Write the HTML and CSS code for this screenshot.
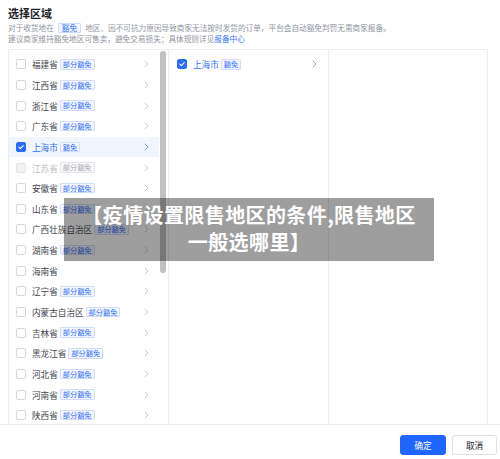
FILE: index.html
```html
<!DOCTYPE html>
<html lang="zh-CN">
<head>
<meta charset="utf-8">
<link rel="stylesheet" href="styles.css">
</head>
<body>
<div class="page">
  <div class="head">
    <div class="title">选择区域</div>
    <div class="desc">对于收货地在<span class="dtag">豁免</span>地区、因不可抗力原因导致商家无法按时发货的订单，平台会自动豁免判罚无需商家报备。</div>
    <div class="desc">建议商家维持豁免地区可售卖，避免交易损失；具体规则详见<span class="link">报备中心</span></div>
  </div>
  <div class="panel">
    <div class="col col1">
      <div class="list">
        <div class="row"><span class="cb"></span><span class="name">福建省</span><span class="tag">部分豁免</span><svg class="arr" viewBox="0 0 5 8"><path d="M1 1 L4 4 L1 7"/></svg></div>
        <div class="row"><span class="cb"></span><span class="name">江西省</span><span class="tag">部分豁免</span><svg class="arr" viewBox="0 0 5 8"><path d="M1 1 L4 4 L1 7"/></svg></div>
        <div class="row"><span class="cb"></span><span class="name">浙江省</span><span class="tag">部分豁免</span><svg class="arr" viewBox="0 0 5 8"><path d="M1 1 L4 4 L1 7"/></svg></div>
        <div class="row"><span class="cb"></span><span class="name">广东省</span><span class="tag">部分豁免</span><svg class="arr" viewBox="0 0 5 8"><path d="M1 1 L4 4 L1 7"/></svg></div>
        <div class="row active"><span class="cb on"><svg viewBox="0 0 10 10"><path d="M2.3 5.2 L4.2 7 L7.8 3.2" fill="none" stroke="#fff" stroke-width="1.3" stroke-linecap="round" stroke-linejoin="round"/></svg></span><span class="name">上海市</span><span class="tag">豁免</span><svg class="arr" viewBox="0 0 5 8"><path d="M1 1 L4 4 L1 7"/></svg></div>
        <div class="row disabled"><span class="cb"></span><span class="name">江苏省</span><span class="tag">部分豁免</span><svg class="arr" viewBox="0 0 5 8"><path d="M1 1 L4 4 L1 7"/></svg></div>
        <div class="row"><span class="cb"></span><span class="name">安徽省</span><span class="tag">部分豁免</span><svg class="arr" viewBox="0 0 5 8"><path d="M1 1 L4 4 L1 7"/></svg></div>
        <div class="row"><span class="cb"></span><span class="name">山东省</span><span class="tag">部分豁免</span><svg class="arr" viewBox="0 0 5 8"><path d="M1 1 L4 4 L1 7"/></svg></div>
        <div class="row"><span class="cb"></span><span class="name">广西壮族自治区</span><span class="tag">部分豁免</span><svg class="arr" viewBox="0 0 5 8"><path d="M1 1 L4 4 L1 7"/></svg></div>
        <div class="row"><span class="cb"></span><span class="name">湖南省</span><span class="tag">部分豁免</span><svg class="arr" viewBox="0 0 5 8"><path d="M1 1 L4 4 L1 7"/></svg></div>
        <div class="row"><span class="cb"></span><span class="name">海南省</span><svg class="arr" viewBox="0 0 5 8"><path d="M1 1 L4 4 L1 7"/></svg></div>
        <div class="row"><span class="cb"></span><span class="name">辽宁省</span><span class="tag">部分豁免</span><svg class="arr" viewBox="0 0 5 8"><path d="M1 1 L4 4 L1 7"/></svg></div>
        <div class="row"><span class="cb"></span><span class="name">内蒙古自治区</span><span class="tag">部分豁免</span><svg class="arr" viewBox="0 0 5 8"><path d="M1 1 L4 4 L1 7"/></svg></div>
        <div class="row"><span class="cb"></span><span class="name">吉林省</span><span class="tag">部分豁免</span><svg class="arr" viewBox="0 0 5 8"><path d="M1 1 L4 4 L1 7"/></svg></div>
        <div class="row"><span class="cb"></span><span class="name">黑龙江省</span><span class="tag">部分豁免</span><svg class="arr" viewBox="0 0 5 8"><path d="M1 1 L4 4 L1 7"/></svg></div>
        <div class="row"><span class="cb"></span><span class="name">河北省</span><span class="tag">部分豁免</span><svg class="arr" viewBox="0 0 5 8"><path d="M1 1 L4 4 L1 7"/></svg></div>
        <div class="row"><span class="cb"></span><span class="name">河南省</span><span class="tag">部分豁免</span><svg class="arr" viewBox="0 0 5 8"><path d="M1 1 L4 4 L1 7"/></svg></div>
        <div class="row"><span class="cb"></span><span class="name">陕西省</span><span class="tag">部分豁免</span><svg class="arr" viewBox="0 0 5 8"><path d="M1 1 L4 4 L1 7"/></svg></div>
      </div>
      <div class="track"><div class="thumb"></div></div>
    </div>
    <div class="col col2">
      <div class="list">
        <div class="row sel"><span class="cb on"><svg viewBox="0 0 10 10"><path d="M2.3 5.2 L4.2 7 L7.8 3.2" fill="none" stroke="#fff" stroke-width="1.3" stroke-linecap="round" stroke-linejoin="round"/></svg></span><span class="name">上海市</span><span class="tag">豁免</span><svg class="arr" viewBox="0 0 5 8"><path d="M1 1 L4 4 L1 7"/></svg></div>
      </div>
    </div>
    <div class="col col3"></div>
  </div>
  <div class="foot">
    <button class="btn primary">确定</button>
    <button class="btn">取消</button>
  </div>
  <div class="overlay"><span class="ol">【疫情设置限售地区的条件,限售地区</span><span class="ol">一般选哪里】</span></div>
</div>
</body>
</html>
```

FILE: styles.css
```css
* { box-sizing: border-box; }
html, body { margin: 0; padding: 0; background: #fff; }
body {
  width: 500px;
  height: 459px;
  overflow: hidden;
  font-family: "Noto Sans CJK SC", "Noto Sans", sans-serif;
  color: #3a3f47;
}
.page { position: relative; width: 500px; height: 459px; }
.head { padding: 6px 8px 0 8px; height: 49px; }
.title { font-size: 11px; font-weight: 700; color: #1f2329; line-height: 15px; margin-bottom: 1px; }
.desc { font-size: 7.65px; line-height: 11px; color: #8f959e; white-space: nowrap; }
.dtag {
  display: inline-block;
  border: 1px solid #cfdcf7;
  background: #f4f7fd;
  color: #3370ff;
  padding: 0 3px;
  line-height: 8px;
  margin: 0 4px;
  border-radius: 1px;
}
.link { color: #3370ff; }
.panel {
  display: flex;
  margin-left: 8px;
  width: 480px;
  height: 375px;
  border-top: 1px solid #eceef1;
}
.col { height: 100%; overflow: hidden; }
.col1 { width: 160px; display: flex; border-left: 1px solid #eceef1; }
.col1 .list { width: 151px; }
.track { width: 9px; padding: 0 1px 0 1px; }
.thumb { width: 6px; height: 222px; margin-top: 1px; background: #c1c1c1; border-radius: 3px; }
.col2 { width: 160px; border-left: 1px solid #eceef1; }
.col3 { width: 160px; border-left: 1px solid #eceef1; border-right: 1px solid #eceef1; }
.list { padding-top: 4px; }
.row {
  height: 20.65px;
  display: flex;
  align-items: center;
  padding-left: 7px;
  padding-right: 10px;
  font-size: 8.6px;
  white-space: nowrap;
}
.cb {
  width: 10px; height: 10px;
  border: 1px solid #d4d7dc;
  border-radius: 2px;
  background: #fff;
  flex: none;
  margin-right: 6px;
  display: flex;
}
.cb svg { width: 100%; height: 100%; }
.cb.on { background: #2b6cf6; border-color: #2b6cf6; }
.name { color: #41464e; }
.tag {
  margin-left: 2px;
  font-size: 7.2px;
  line-height: 8.5px;
  padding: 0 2px;
  border: 1px solid #d2def8;
  background: #f3f6fd;
  color: #3370ff;
  border-radius: 1px;
}
.arr {
  margin-left: auto;
  width: 5px;
  height: 8px;
  flex: none;
  fill: none;
  stroke: #c3c6cb;
  stroke-width: 0.9;
  stroke-linecap: round;
  stroke-linejoin: round;
}
.row.active { background: #f1f5fe; }
.row.active .name, .row.sel .name { color: #2b6cf6; }
.row.active .arr, .row.sel .arr { stroke: #6b9af7; }
.row.sel { padding-left: 8px; padding-right: 11px; }
.row.disabled .name { color: #bbbfc4; }
.row.disabled .cb { background: #f2f3f5; border-color: #e0e2e5; }
.row.disabled .tag { color: #a8acb2; background: #fafafa; border-color: #e4e6e9; }
.foot {
  border-top: 1px solid #eceef1;
  height: 35px;
  display: flex;
  justify-content: flex-end;
  align-items: flex-start;
  padding: 10px 3px 0 0;
  gap: 6px;
}
.btn {
  font-family: inherit;
  width: 45px;
  height: 20px;
  padding: 0;
  font-size: 8.6px;
  border-radius: 3px;
  border: 1px solid #dee0e3;
  background: #fff;
  color: #1f2329;
}
.btn.primary { width: 46px; background: #1f66ff; border-color: #1f66ff; color: #fff; }
.overlay {
  position: absolute;
  left: 64px;
  top: 198px;
  width: 370px;
  height: 63px;
  background: rgba(0, 0, 0, 0.38);
  color: #fff;
  font-weight: 700;
  font-size: 20px;
  line-height: 27px;
  letter-spacing: 0.4px;
  text-align: center;
  padding-top: 3px;
  white-space: nowrap;
}
.ol { display: block; }
```
